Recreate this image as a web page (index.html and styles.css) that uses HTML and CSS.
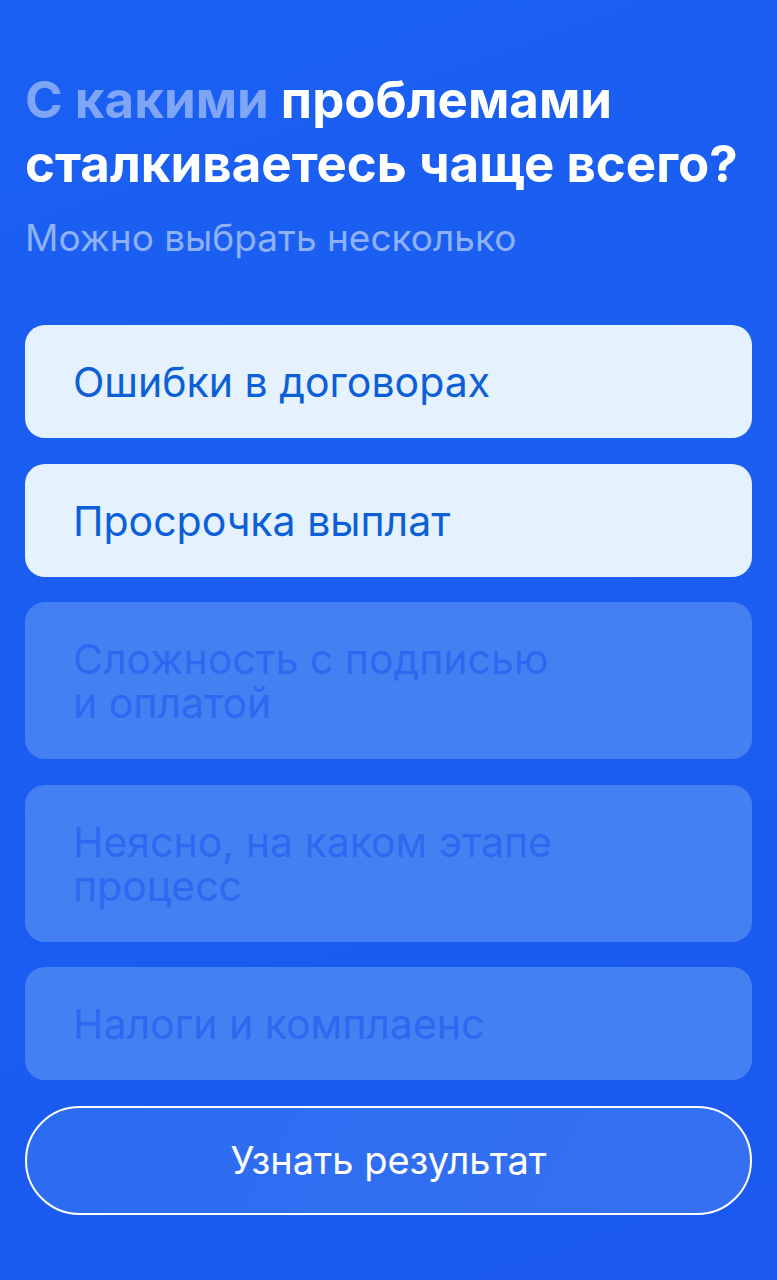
FILE: index.html
```html
<!DOCTYPE html>
<html lang="ru">
<head>
    <meta charset="UTF-8">
    <title>Квиз</title>
    <link rel="stylesheet" href="styles.css">
</head>
<body>
    <div class="quiz">
        <h1 class="title"><span class="muted">С какими</span> проблемами сталкиваетесь чаще всего?</h1>
        <p class="hint">Можно выбрать несколько</p>

        <!-- Варианты ответа -->
        <div class="options">
            <div class="option selected">Ошибки в договорах</div>
            <div class="option selected">Просрочка выплат</div>
            <div class="option">Сложность с подписью<br>и оплатой</div>
            <div class="option">Неясно, на каком этапе<br>процесс</div>
            <div class="option">Налоги и комплаенс</div>
            <button class="result-btn">Узнать результат</button>
        </div>
    </div>
</body>
</html>
```

FILE: styles.css
```css
html, body {
    margin: 0;
    padding: 0;
}
body {
    font-family: Inter, "Noto Sans", sans-serif;
    background: linear-gradient(160deg, #1a60f2 0%, #1b5df0 60%, #1a58ef 100%);
    min-height: 1280px;
}
.quiz {
    padding: 68px 25px 0;
}
.title {
    margin: 0;
    font-size: 51px;
    line-height: 64px;
    font-weight: 700;
    color: #fff;
}
.title .muted {
    color: #7fa5f6;
}
.hint {
    margin: 22px 0 0;
    font-size: 37px;
    line-height: 40px;
    color: #8eb1f7;
}
.options {
    margin-top: 67px;
    display: flex;
    flex-direction: column;
    gap: 25.5px;
}
.option {
    background-color: #4580f3;
    color: #2b6af0;
    border-radius: 20px;
    padding: 35px 48px 34px;
    font-size: 41px;
    line-height: 44px;
}
.option.selected {
    background-color: #e6f1fe;
    color: #0b5fd7;
}
.result-btn {
    height: 109px;
    border: 2px solid #fff;
    border-radius: 55px;
    background: linear-gradient(120deg, #2b6cf1, #3570f2);
    color: #fff;
    font-family: Inter, "Noto Sans", sans-serif;
    font-size: 38px;
    cursor: pointer;
}
```
